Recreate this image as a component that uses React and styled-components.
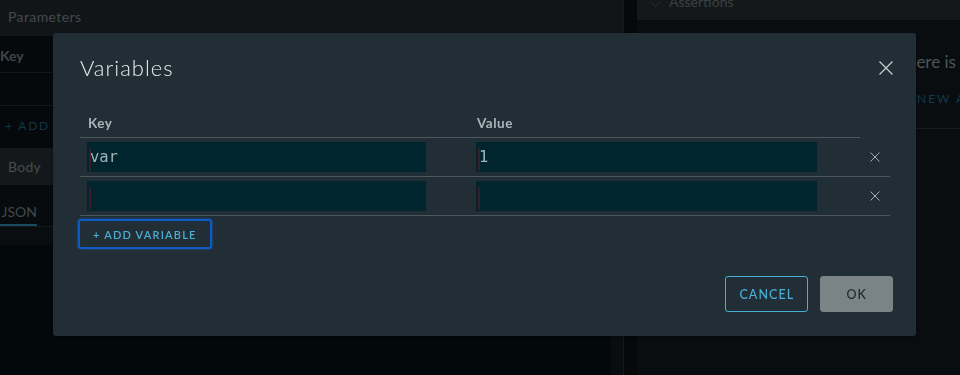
import React from 'react';
import styled, { createGlobalStyle } from 'styled-components';

const GlobalStyle = createGlobalStyle`
  html, body {
    margin: 0;
    padding: 0;
    background: #03080a;
    font-family: Lato, "Open Sans", sans-serif;
  }
`;

const Page = styled.div`
  display: flex;
  height: 375px;
  overflow: hidden;
  background: #03080a;
`;

/* ---- dimmed page behind the dialog ---- */

const LeftPane = styled.div`
  width: 611px;
  flex-shrink: 0;
  display: flex;
  flex-direction: column;
`;

const PaneHeader = styled.div`
  height: 36px;
  display: flex;
  align-items: center;
  padding: 0 0 3px 8px;
  box-sizing: border-box;
  background: #121518;
  color: #43494d;
  font-size: 14px;
  letter-spacing: 0.4px;
`;

const DarkBlock = styled.div`
  background: #06090b;
`;

const HeadCell = styled.div`
  height: 37px;
  display: flex;
  align-items: center;
  padding-top: 3px;
  box-sizing: border-box;
  border-bottom: 1px solid #15191c;
  color: #3f4549;
  font-size: 14px;
  font-weight: 700;
`;

const EmptyRow = styled.div`
  height: 32px;
  border-bottom: 1px solid #15191c;
`;

const GhostLink = styled.div`
  height: 42px;
  display: flex;
  align-items: center;
  padding: 0 0 4px 5px;
  box-sizing: border-box;
  color: #133646;
  font-size: 12px;
  letter-spacing: 1.8px;
  white-space: nowrap;
`;

const SectionHeader = styled.div`
  height: 37px;
  display: flex;
  align-items: center;
  padding-left: 8px;
  background: #14181b;
  color: #464c50;
  font-size: 14px;
  letter-spacing: 0.3px;
`;

const TabBar = styled.div`
  height: 41px;
  display: flex;
  align-items: flex-end;
  background: #080b0d;
  border-bottom: 1px solid #15191c;
`;

const Tab = styled.div`
  width: 37px;
  height: 28px;
  display: flex;
  align-items: center;
  justify-content: flex-end;
  color: #42484c;
  font-size: 14px;
  border-bottom: 2px solid #1b4a5f;
  box-sizing: border-box;
  overflow: hidden;
  white-space: nowrap;
`;

const Strip = styled.div`
  height: 18px;
  background: #0a0d0f;
`;

const Gutter = styled.div`
  width: 12px;
  flex-shrink: 0;
  background: #0a0d0f;
  border-right: 1px solid #16191c;
  box-shadow: inset 0 33px 0 #121518;
`;

const RightPane = styled.div`
  flex: 1;
  min-width: 0;
  display: flex;
  flex-direction: column;
  padding-left: 13px;
  background: #06080a;
`;

const Panel = styled.div`
  flex: 1;
  background: #0a0d10;
  overflow: hidden;
`;

const PanelHeader = styled.div`
  height: 20px;
  display: flex;
  align-items: flex-end;
  gap: 9px;
  padding-left: 14px;
  background: #15181b;
  color: #394044;
  font-size: 14px;
  line-height: 14px;
  overflow: hidden;
`;

const HeaderText = styled.span`
  margin-bottom: 11px;
`;

const EmptyText = styled.div`
  padding: 32px 0 0 260px;
  line-height: 20px;
  color: #4d5458;
  font-size: 17px;
  white-space: nowrap;
`;

const NewLink = styled.div`
  padding: 20px 0 0 266px;
  height: 57px;
  line-height: 14px;
  box-sizing: border-box;
  color: #113a4c;
  font-size: 12px;
  letter-spacing: 2px;
  white-space: nowrap;
  border-bottom: 1px solid #181c1f;
`;

/* ---- dialog ---- */

const Modal = styled.div`
  position: fixed;
  left: 53px;
  top: 33px;
  width: 863px;
  height: 303px;
  box-sizing: border-box;
  padding: 21px 23px 24px 27px;
  display: flex;
  flex-direction: column;
  background: #222e35;
  border-radius: 3px;
  box-shadow: 0 1px 3px rgba(0, 0, 0, 0.4);
`;

const ModalHeader = styled.div`
  display: flex;
  justify-content: space-between;
  align-items: center;
  height: 28px;
`;

const Title = styled.h3`
  margin: 0;
  font-size: 22px;
  line-height: 28px;
  font-weight: 300;
  letter-spacing: 1px;
  color: #e9ecef;
`;

const Close = styled.button`
  width: 14px;
  height: 14px;
  padding: 0;
  border: none;
  background: none;
  color: #c6ccd0;
  display: flex;
`;

const Table = styled.div`
  margin-top: 33px;
  width: 810px;
`;

const HeadRow = styled.div`
  display: grid;
  grid-template-columns: 389px 391px;
  width: 780px;
  padding-bottom: 6px;
  border-bottom: 1px solid #4d575d;
`;

const Th = styled.div`
  padding-left: 8px;
  font-size: 13.5px;
  line-height: 16px;
  font-weight: 700;
  letter-spacing: 0.5px;
  color: #a9b4bb;
`;

const Row = styled.div`
  display: grid;
  grid-template-columns: 389px 391px 30px;
  align-items: center;
  padding: 4px 0;
  border-bottom: 1px solid #4d575d;
`;

const Field = styled.div`
  width: ${p => p.$w}px;
  height: 30px;
  margin-left: 7px;
  display: flex;
  align-items: center;
  background: #01252e;
  color: #a3b2b9;
  font-family: "DejaVu Sans Mono", monospace;
  font-size: 15.5px;
`;

const Caret = styled.span`
  width: 2px;
  height: 23px;
  margin: 6px -1px 0 2px;
  background: #3e1c24;
  align-self: flex-start;
`;

const Remove = styled.button`
  justify-self: center;
  width: 10px;
  height: 10px;
  padding: 0;
  border: none;
  background: none;
  color: #a4aeb4;
  display: flex;
`;

const AddButton = styled.button`
  align-self: flex-start;
  margin: 3px 0 0 -2px;
  height: 30px;
  padding: 0 13px;
  border: 2px solid #0d5cc6;
  border-radius: 3px;
  box-shadow: 0 0 2px #1a6be0;
  background: transparent;
  color: #4aaed6;
  font-family: Lato, sans-serif;
  font-size: 11px;
  font-weight: 600;
  letter-spacing: 1.2px;
`;

const Footer = styled.div`
  margin-top: auto;
  display: flex;
  justify-content: flex-end;
  gap: 12px;
`;

const Button = styled.button`
  height: 36px;
  padding: 0 ${p => (p.$primary ? 25 : 13)}px;
  border-radius: 3px;
  border: 1px solid ${p => (p.$primary ? '#7a8486' : '#49afd9')};
  background: ${p => (p.$primary ? '#7a8486' : 'transparent')};
  color: ${p => (p.$primary ? '#1e262a' : '#49afd9')};
  font-family: Lato, sans-serif;
  font-size: 12.5px;
  font-weight: 500;
  letter-spacing: 1.1px;
`;

const XIcon = ({ size, stroke = 1 }) => (
  <svg width={size} height={size} viewBox={`0 0 ${size} ${size}`} fill="none">
    <path
      d={`M0.5 0.5 L${size - 0.5} ${size - 0.5} M${size - 0.5} 0.5 L0.5 ${size - 0.5}`}
      stroke="currentColor"
      strokeWidth={stroke}
    />
  </svg>
);

const Chevron = () => (
  <svg width="9" height="6" viewBox="0 0 9 6" fill="none" style={{ marginBottom: 12 }}>
    <path d="M0.5 0.5 L4.5 4.5 L8.5 0.5" stroke="#2b3135" strokeWidth="1" />
  </svg>
);

const variables = [
  { key: 'var', value: '1' },
  { key: '', value: '' }
];

const App = () => (
  <>
    <GlobalStyle />
    <Page>
      <LeftPane>
        <PaneHeader>Parameters</PaneHeader>
        <DarkBlock>
          <HeadCell>Key</HeadCell>
          <EmptyRow />
          <GhostLink>+ ADD PARAMETER</GhostLink>
        </DarkBlock>
        <SectionHeader>Body</SectionHeader>
        <TabBar>
          <Tab>JSON</Tab>
        </TabBar>
        <Strip />
      </LeftPane>
      <Gutter />
      <RightPane>
        <Panel>
          <PanelHeader>
            <Chevron />
            <HeaderText>Assertions</HeaderText>
          </PanelHeader>
          <EmptyText>There is no assertion</EmptyText>
          <NewLink>+ NEW ASSERTION</NewLink>
        </Panel>
      </RightPane>

      <Modal>
        <ModalHeader>
          <Title>Variables</Title>
          <Close aria-label="Close">
            <XIcon size={14} stroke={1.3} />
          </Close>
        </ModalHeader>
        <Table>
          <HeadRow>
            <Th>Key</Th>
            <Th>Value</Th>
          </HeadRow>
          {variables.map((v, i) => (
            <Row key={i}>
              <Field $w={339}>
                <Caret />
                {v.key}
              </Field>
              <Field $w={341}>
                <Caret />
                {v.value}
              </Field>
              <Remove aria-label="Remove">
                <XIcon size={10} />
              </Remove>
            </Row>
          ))}
        </Table>
        <AddButton>+ ADD VARIABLE</AddButton>
        <Footer>
          <Button>CANCEL</Button>
          <Button $primary>OK</Button>
        </Footer>
      </Modal>
    </Page>
  </>
);

export default App;
